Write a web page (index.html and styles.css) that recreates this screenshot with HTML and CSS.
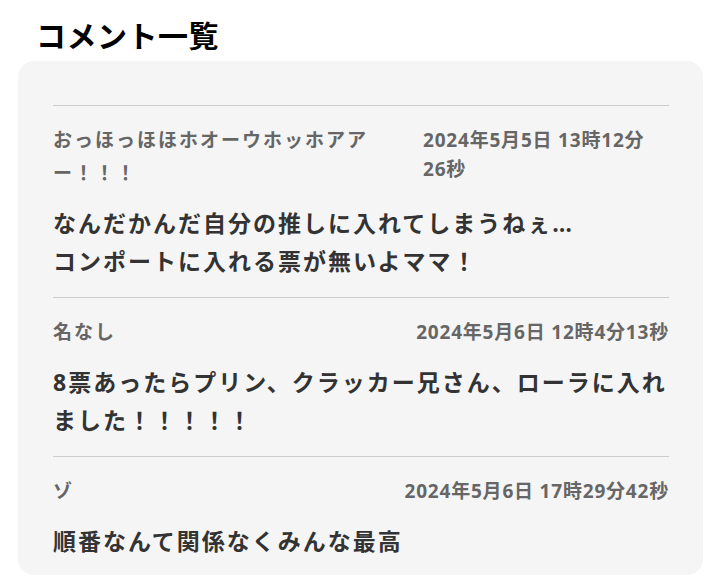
FILE: index.html
```html
<!DOCTYPE html>
<html lang="ja">
<head>
  <meta charset="UTF-8">
  <meta name="viewport" content="width=device-width, initial-scale=1.0">
  <title>コメント一覧</title>
  <link rel="stylesheet" href="styles.css">
</head>
<body>
  <div class="page">
    <h2 class="title">コメント一覧</h2>
    <div class="card">
      <div class="comment">
        <div class="meta">
          <span class="name">おっほっほほホオーウホッホアアー！！！</span>
          <span class="date date-narrow">2024年5月5日 13時12分<span class="nobr">26秒</span></span>
        </div>
        <p class="text">なんだかんだ自分の推しに入れてしまうねぇ…<br>コンポートに入れる票が無いよママ！</p>
      </div>
      <div class="comment">
        <div class="meta">
          <span class="name">名なし</span>
          <span class="date">2024年5月6日 12時4分13秒</span>
        </div>
        <p class="text">8票あったらプリン、クラッカー兄さん、ローラに入れました！！！！！</p>
      </div>
      <div class="comment">
        <div class="meta">
          <span class="name">ゾ</span>
          <span class="date">2024年5月6日 17時29分42秒</span>
        </div>
        <p class="text">順番なんて関係なくみんな最高</p>
      </div>
    </div>
  </div>
</body>
</html>
```

FILE: styles.css
```css
body {
  margin: 0;
  font-family: "Open Sans", "Noto Sans CJK JP", sans-serif;
  background-color: #ffffff;
  color: #333333;
}
.page {
  padding: 0 17px 0 18px;
}
.title {
  margin: 0;
  padding: 17px 0 6px 18px;
  font-size: 30px;
  line-height: 38px;
  letter-spacing: 0.5px;
  font-weight: 700;
  color: #000000;
}
.card {
  background-color: #f5f5f5;
  border-radius: 16px;
  padding: 44px 34px 15px 35px;
}
.comment {
  border-top: 1px solid #cccccc;
  padding-top: 18px;
}
.meta {
  display: flex;
  justify-content: space-between;
  align-items: flex-start;
  gap: 40px;
}
.name {
  font-size: 19px;
  line-height: 33px;
  letter-spacing: 2px;
  font-weight: 700;
  color: #666666;
}
.date {
  flex-shrink: 0;
  font-size: 19px;
  line-height: 29px;
  letter-spacing: 0.8px;
  font-weight: 700;
  color: #666666;
  padding-top: 2px;
}
.date-narrow {
  width: 246px;
}
.nobr {
  white-space: nowrap;
}
.text {
  margin: 14px 0 17px;
  font-size: 23px;
  line-height: 38px;
  letter-spacing: 2px;
  font-weight: 700;
  color: #333333;
}
.comment:last-child .text {
  margin-bottom: 0;
}
```
